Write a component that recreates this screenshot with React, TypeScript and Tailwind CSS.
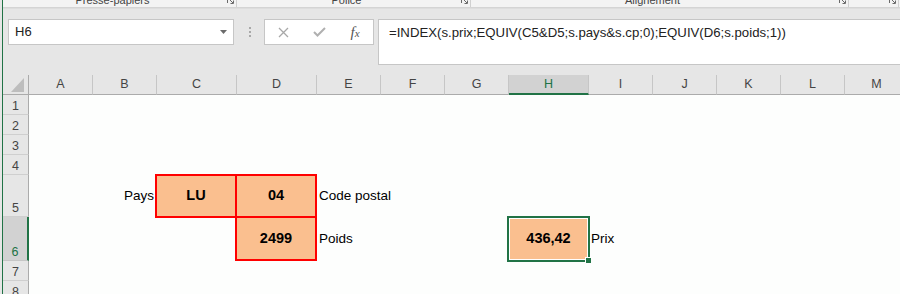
import React from 'react';

const COLS = ['A', 'B', 'C', 'D', 'E', 'F', 'G', 'H', 'I', 'J', 'K', 'L', 'M'];
const ROWS = [1, 2, 3, 4, 5, 6, 7, 8];

function Launcher() {
  return (
    <svg width="7" height="7" viewBox="0 0 7 7" className="block">
      <path d="M0.5 6V0.5H6" stroke="#6a6a6a" fill="none" />
      <path d="M2.5 2.5L6 6M6.5 3.5V6.5H3.5" stroke="#6a6a6a" fill="none" />
    </svg>
  );
}

function RibbonGroup({ label, width }: { label: string; width: string }) {
  return (
    <div className={`flex h-full border-r border-[#d0d0d0] ${width}`}>
      <div className="flex-1 text-center text-[11px] leading-[14px] -mt-[7px] text-[#444] whitespace-nowrap">{label}</div>
      <div className="w-[14px] flex justify-end pr-[2px] -mt-[3px]">
        <Launcher />
      </div>
    </div>
  );
}

function RedBox({ children, flushBottom }: { children: React.ReactNode; flushBottom?: boolean }) {
  return (
    <div
      className={`absolute -left-[2px] -top-[1px] right-0 ${flushBottom ? 'bottom-0' : '-bottom-[1px]'} border-2 border-[#ff0000] bg-[#fabf8f] flex items-center justify-center font-bold text-[14.5px] text-black`}
    >
      {children}
    </div>
  );
}

function Selection({ children }: { children: React.ReactNode }) {
  return (
    <div className="absolute -left-[2px] -top-[1px] -right-[1px] -bottom-[1px] border-2 border-[#217346]">
      <div className="h-full w-full bg-[#fabf8f] shadow-[inset_0_0_0_1px_#ffffff] flex items-center justify-center font-bold text-[14.5px] text-black">
        {children}
      </div>
      <div className="absolute -right-[3px] -bottom-[3px] w-[6px] h-[6px] bg-[#217346] border-l border-t border-white" />
    </div>
  );
}

function cellContent(r: number, c: string) {
  const key = `${c}${r}`;
  switch (key) {
    case 'B5':
      return <div className="h-full flex items-center justify-end pr-[3px] text-[13.5px] text-black">Pays</div>;
    case 'C5':
      return <RedBox>LU</RedBox>;
    case 'D5':
      return <RedBox>04</RedBox>;
    case 'E5':
      return <div className="h-full flex items-center pl-[2px] text-[13.5px] text-black whitespace-nowrap">Code postal</div>;
    case 'D6':
      return <RedBox flushBottom>2499</RedBox>;
    case 'E6':
      return <div className="h-full flex items-center pl-[2px] text-[13.5px] text-black">Poids</div>;
    case 'H6':
      return <Selection>436,42</Selection>;
    case 'I6':
      return <div className="h-full flex items-center pl-[2px] text-[13.5px] text-black">Prix</div>;
    default:
      return null;
  }
}

export default function App() {
  return (
    <div className="flex w-[900px] h-[294px] overflow-hidden font-['Liberation_Sans',Arial,sans-serif] bg-[#e6e6e6]">
      <div className="w-[2px] shrink-0 bg-[#e6e6e6]" />
      <div className="w-px shrink-0 bg-[#217346]" />
      <div className="flex-1 min-w-0 flex flex-col">
        {/* Ribbon group labels (cut) */}
        <div className="flex h-[7px] overflow-hidden bg-[#f3f3f3] shrink-0">
          <RibbonGroup label="Presse-papiers" width="w-[234px]" />
          <RibbonGroup label="Police" width="w-[234px]" />
          <RibbonGroup label="Alignement" width="w-[378px]" />
          <RibbonGroup label="" width="w-[50px]" />
        </div>
        <div className="h-px bg-[#d4d4d4] shrink-0" />
        <div className="h-px bg-[#dddddd] shrink-0" />

        {/* Formula bar row */}
        <div className="h-[66px] shrink-0 flex items-start pt-[10px]">
          <div className="ml-[5px] w-[226px] h-[26px] border border-[#c6c6c6] bg-white flex items-center justify-between pl-[6px] pr-[6px] text-[13px] text-[#222]">
            <span>H6</span>
            <svg width="7" height="4" viewBox="0 0 7 4">
              <path d="M0 0H7L3.5 4Z" fill="#6b6b6b" />
            </svg>
          </div>
          <div className="ml-[15px] mt-[8px] flex flex-col gap-[2px]">
            <div className="w-[2px] h-[2px] bg-[#a8a8a8]" />
            <div className="w-[2px] h-[2px] bg-[#a8a8a8]" />
            <div className="w-[2px] h-[2px] bg-[#a8a8a8]" />
          </div>
          <div className="ml-[13px] w-[110px] h-[26px] border border-[#c6c6c6] bg-white flex items-center">
            <div className="w-[36px] flex justify-center">
              <svg width="11" height="11" viewBox="0 0 11 11">
                <path d="M1 1L10 10M10 1L1 10" stroke="#a8a8a8" strokeWidth="1.3" fill="none" />
              </svg>
            </div>
            <div className="w-[36px] flex justify-center">
              <svg width="13" height="10" viewBox="0 0 13 10">
                <path d="M1 5L4.5 8.5L12 1" stroke="#b0b0b0" strokeWidth="2" fill="none" />
              </svg>
            </div>
            <div className="w-[36px] flex justify-center">
              <span className="font-['Liberation_Serif',serif] italic text-[15px] leading-[16px] text-[#555]">
                f<span className="text-[11px]">x</span>
              </span>
            </div>
          </div>
          <div className="ml-[4px] flex-1 h-[46px] border-t border-b border-l border-[#c6c6c6] bg-white pl-[10px] pt-[5px] text-[13.2px] leading-[16px] text-[#222] whitespace-nowrap overflow-hidden">
            =INDEX(s.prix;EQUIV(C5&amp;D5;s.pays&amp;s.cp;0);EQUIV(D6;s.poids;1))
          </div>
        </div>

        {/* Sheet grid */}
        <div className="grid grid-cols-[26px_64px_64px_80px_80px_64px_64px_64px_80px_64px_64px_64px_64px_64px] grid-rows-[20px_20px_20px_20px_20px_42px_44px_20px_20px] bg-[#fdfefd]">
          {/* corner */}
          <div className="bg-[#e6e6e6] border-r border-b border-[#ababab] flex items-end justify-end pr-[4px] pb-[2px]">
            <svg width="13" height="14" viewBox="0 0 13 14">
              <path d="M13 0V14H0Z" fill="#bdbdbd" />
            </svg>
          </div>
          {COLS.map((c) =>
            c === 'H' ? (
              <div
                key={c}
                className="bg-[#d2d2d2] border-r border-[#c6c6c6] border-b-2 border-b-[#217346] flex items-center justify-center text-[12.5px] text-[#217346]"
              >
                {c}
              </div>
            ) : (
              <div
                key={c}
                className="bg-[#e6e6e6] border-r border-[#c6c6c6] border-b border-b-[#ababab] flex items-center justify-center text-[12.5px] text-[#444]"
              >
                {c}
              </div>
            )
          )}
          {ROWS.map((r) => (
            <React.Fragment key={r}>
              {r === 6 ? (
                <div className="bg-[#d2d2d2] border-r-2 border-r-[#217346] border-b border-b-[#c6c6c6] flex items-end justify-center text-[12.5px] leading-[16px] text-[#217346]">
                  {r}
                </div>
              ) : (
                <div className="bg-[#e6e6e6] border-r border-r-[#ababab] border-b border-b-[#cfcfcf] flex items-end justify-center text-[12.5px] leading-[16px] text-[#444]">
                  {r}
                </div>
              )}
              {COLS.map((c) => (
                <div key={c} className="relative">
                  {cellContent(r, c)}
                </div>
              ))}
            </React.Fragment>
          ))}
        </div>
      </div>
    </div>
  );
}
